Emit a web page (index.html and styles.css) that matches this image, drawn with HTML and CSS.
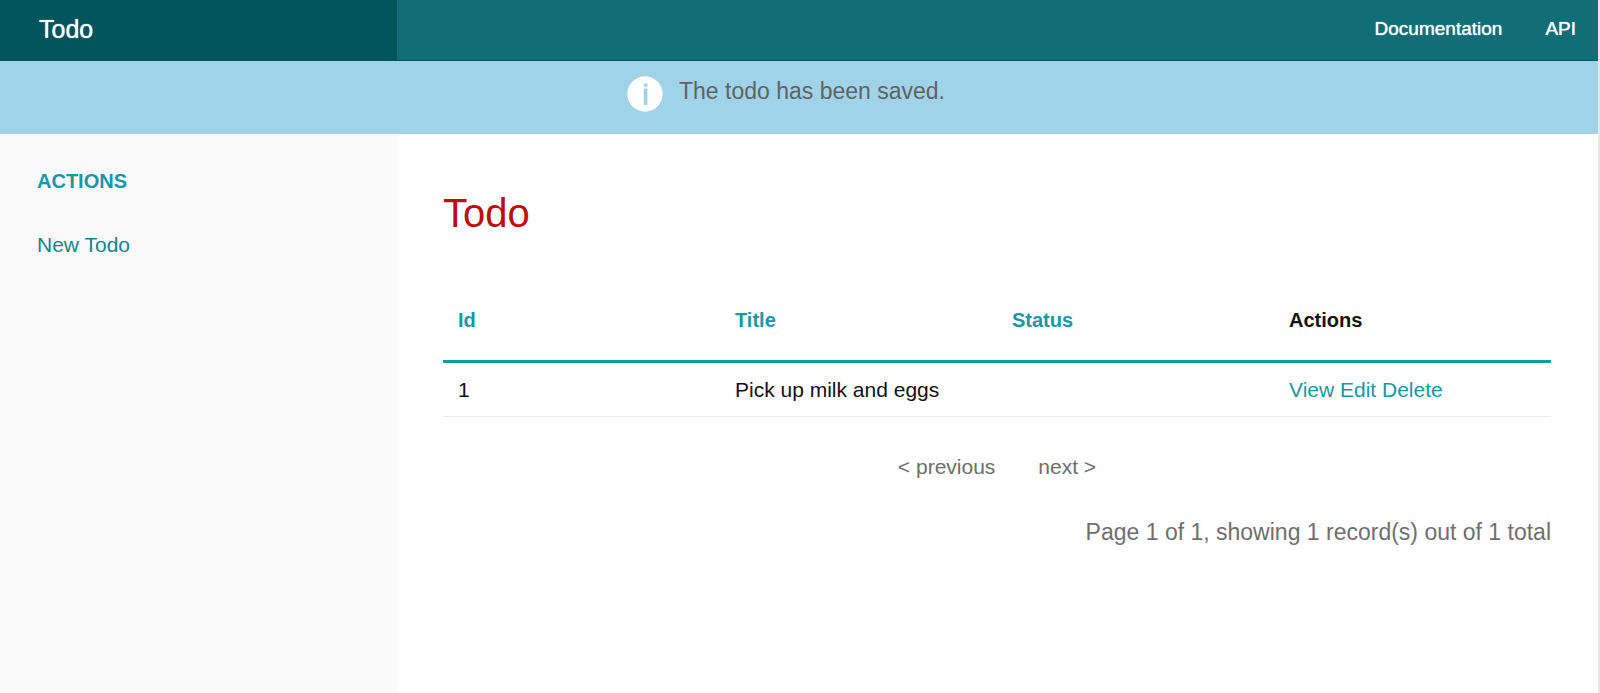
FILE: index.html
```
<!DOCTYPE html>
<html lang="en">
<head>
    <meta charset="UTF-8">
    <meta name="viewport" content="width=device-width, initial-scale=1.0">
    <title>Todo</title>
    <link rel="stylesheet" href="styles.css">
</head>
<body>
    <nav class="top-bar">
        <h1 class="title-area"><a href="#">Todo</a></h1>
        <ul class="top-links">
            <li><a href="#">Documentation</a></li>
            <li><a href="#">API</a></li>
        </ul>
    </nav>
    <div class="message" role="status">
        <svg class="message-icon" viewBox="0 0 36 36" aria-hidden="true">
            <circle cx="18" cy="18" r="17.7" fill="#fff"/>
            <path d="M16.8 7.5h3.6v3.2h-3.6zM16.8 12.6h3.6v16.4h-3.6z" fill="#a0d3e8"/>
        </svg>
        <span>The todo has been saved.</span>
    </div>
    <div class="container">
        <aside class="sidebar">
            <h2 class="heading">Actions</h2>
            <ul class="side-nav">
                <li><a href="#">New Todo</a></li>
            </ul>
        </aside>
        <main class="content">
            <h2 class="page-title">Todo</h2>
            <table class="todos">
                <thead>
                    <tr>
                        <th><a href="#">Id</a></th>
                        <th><a href="#">Title</a></th>
                        <th><a href="#">Status</a></th>
                        <th>Actions</th>
                    </tr>
                </thead>
                <tbody>
                    <tr>
                        <td>1</td>
                        <td>Pick up milk and eggs</td>
                        <td></td>
                        <td><a href="#">View</a> <a href="#">Edit</a> <a href="#">Delete</a></td>
                    </tr>
                </tbody>
            </table>
            <ul class="pagination">
                <li><a href="#">&lt; previous</a></li>
                <li><a href="#">next &gt;</a></li>
            </ul>
            <p class="counter">Page 1 of 1, showing 1 record(s) out of 1 total</p>
        </main>
    </div>
</body>
</html>
```
FILE: styles.css
```
* {
    box-sizing: border-box;
}

body {
    margin: 0;
    min-height: 100vh;
    display: flex;
    flex-direction: column;
    border-right: 2px solid #e7e7e7;
    background: #fff;
    color: #111;
    font-family: "Liberation Sans", Arial, sans-serif;
    font-size: 21px;
    line-height: 24px;
}

h1, h2, p, ul {
    margin: 0;
    padding: 0;
}

ul {
    list-style: none;
}

a {
    color: #1798a5;
    text-decoration: none;
}

.top-bar {
    display: flex;
    justify-content: space-between;
    background: #116d76;
    border-bottom: 1px solid #015c65;
}

.title-area {
    width: 397px;
    padding: 0 39px 2px;
    background: #01545b;
    font-size: 25px;
    font-weight: 500;
    line-height: 58px;
}

.top-links {
    display: flex;
    gap: 43px;
    padding-right: 22px;
    font-size: 19px;
    line-height: 58px;
}

.top-bar a {
    color: #fff;
    text-shadow: 0 0 1px #fff;
}

.message {
    display: flex;
    justify-content: center;
    gap: 16px;
    padding: 15px 26px 22px 0;
    background: #a0d3e8;
    color: #626262;
    font-size: 23px;
    line-height: 30px;
}

.message-icon {
    width: 36px;
    height: 36px;
}

.container {
    display: flex;
    flex: 1;
}

.sidebar {
    flex: 0 0 397px;
    padding: 35px 37px;
    background: #fafafa;
}

.heading {
    margin-bottom: 40px;
    color: #1798a5;
    font-size: 20px;
    text-transform: uppercase;
}

.side-nav a {
    color: #15848f;
}

.content {
    flex: 1;
    padding: 55px 47px 40px 46px;
}

.page-title {
    margin-bottom: 55px;
    color: #bf0d07;
    font-size: 40px;
    font-weight: normal;
    line-height: 48px;
}

.todos {
    width: 100%;
    table-layout: fixed;
    border-collapse: collapse;
}

.todos th {
    padding: 16px 15px 28px;
    border-bottom: 3px solid #1798a5;
    font-size: 20px;
    text-align: left;
}

.todos td {
    padding: 15px 15px 14px;
    border-bottom: 1px solid #ebebec;
}

.pagination {
    display: flex;
    justify-content: center;
    gap: 43px;
    padding-top: 38px;
}

.pagination a {
    color: #6d6d6d;
}

.counter {
    padding-top: 41px;
    color: #6f6f6f;
    font-size: 23px;
    text-align: right;
}
```
